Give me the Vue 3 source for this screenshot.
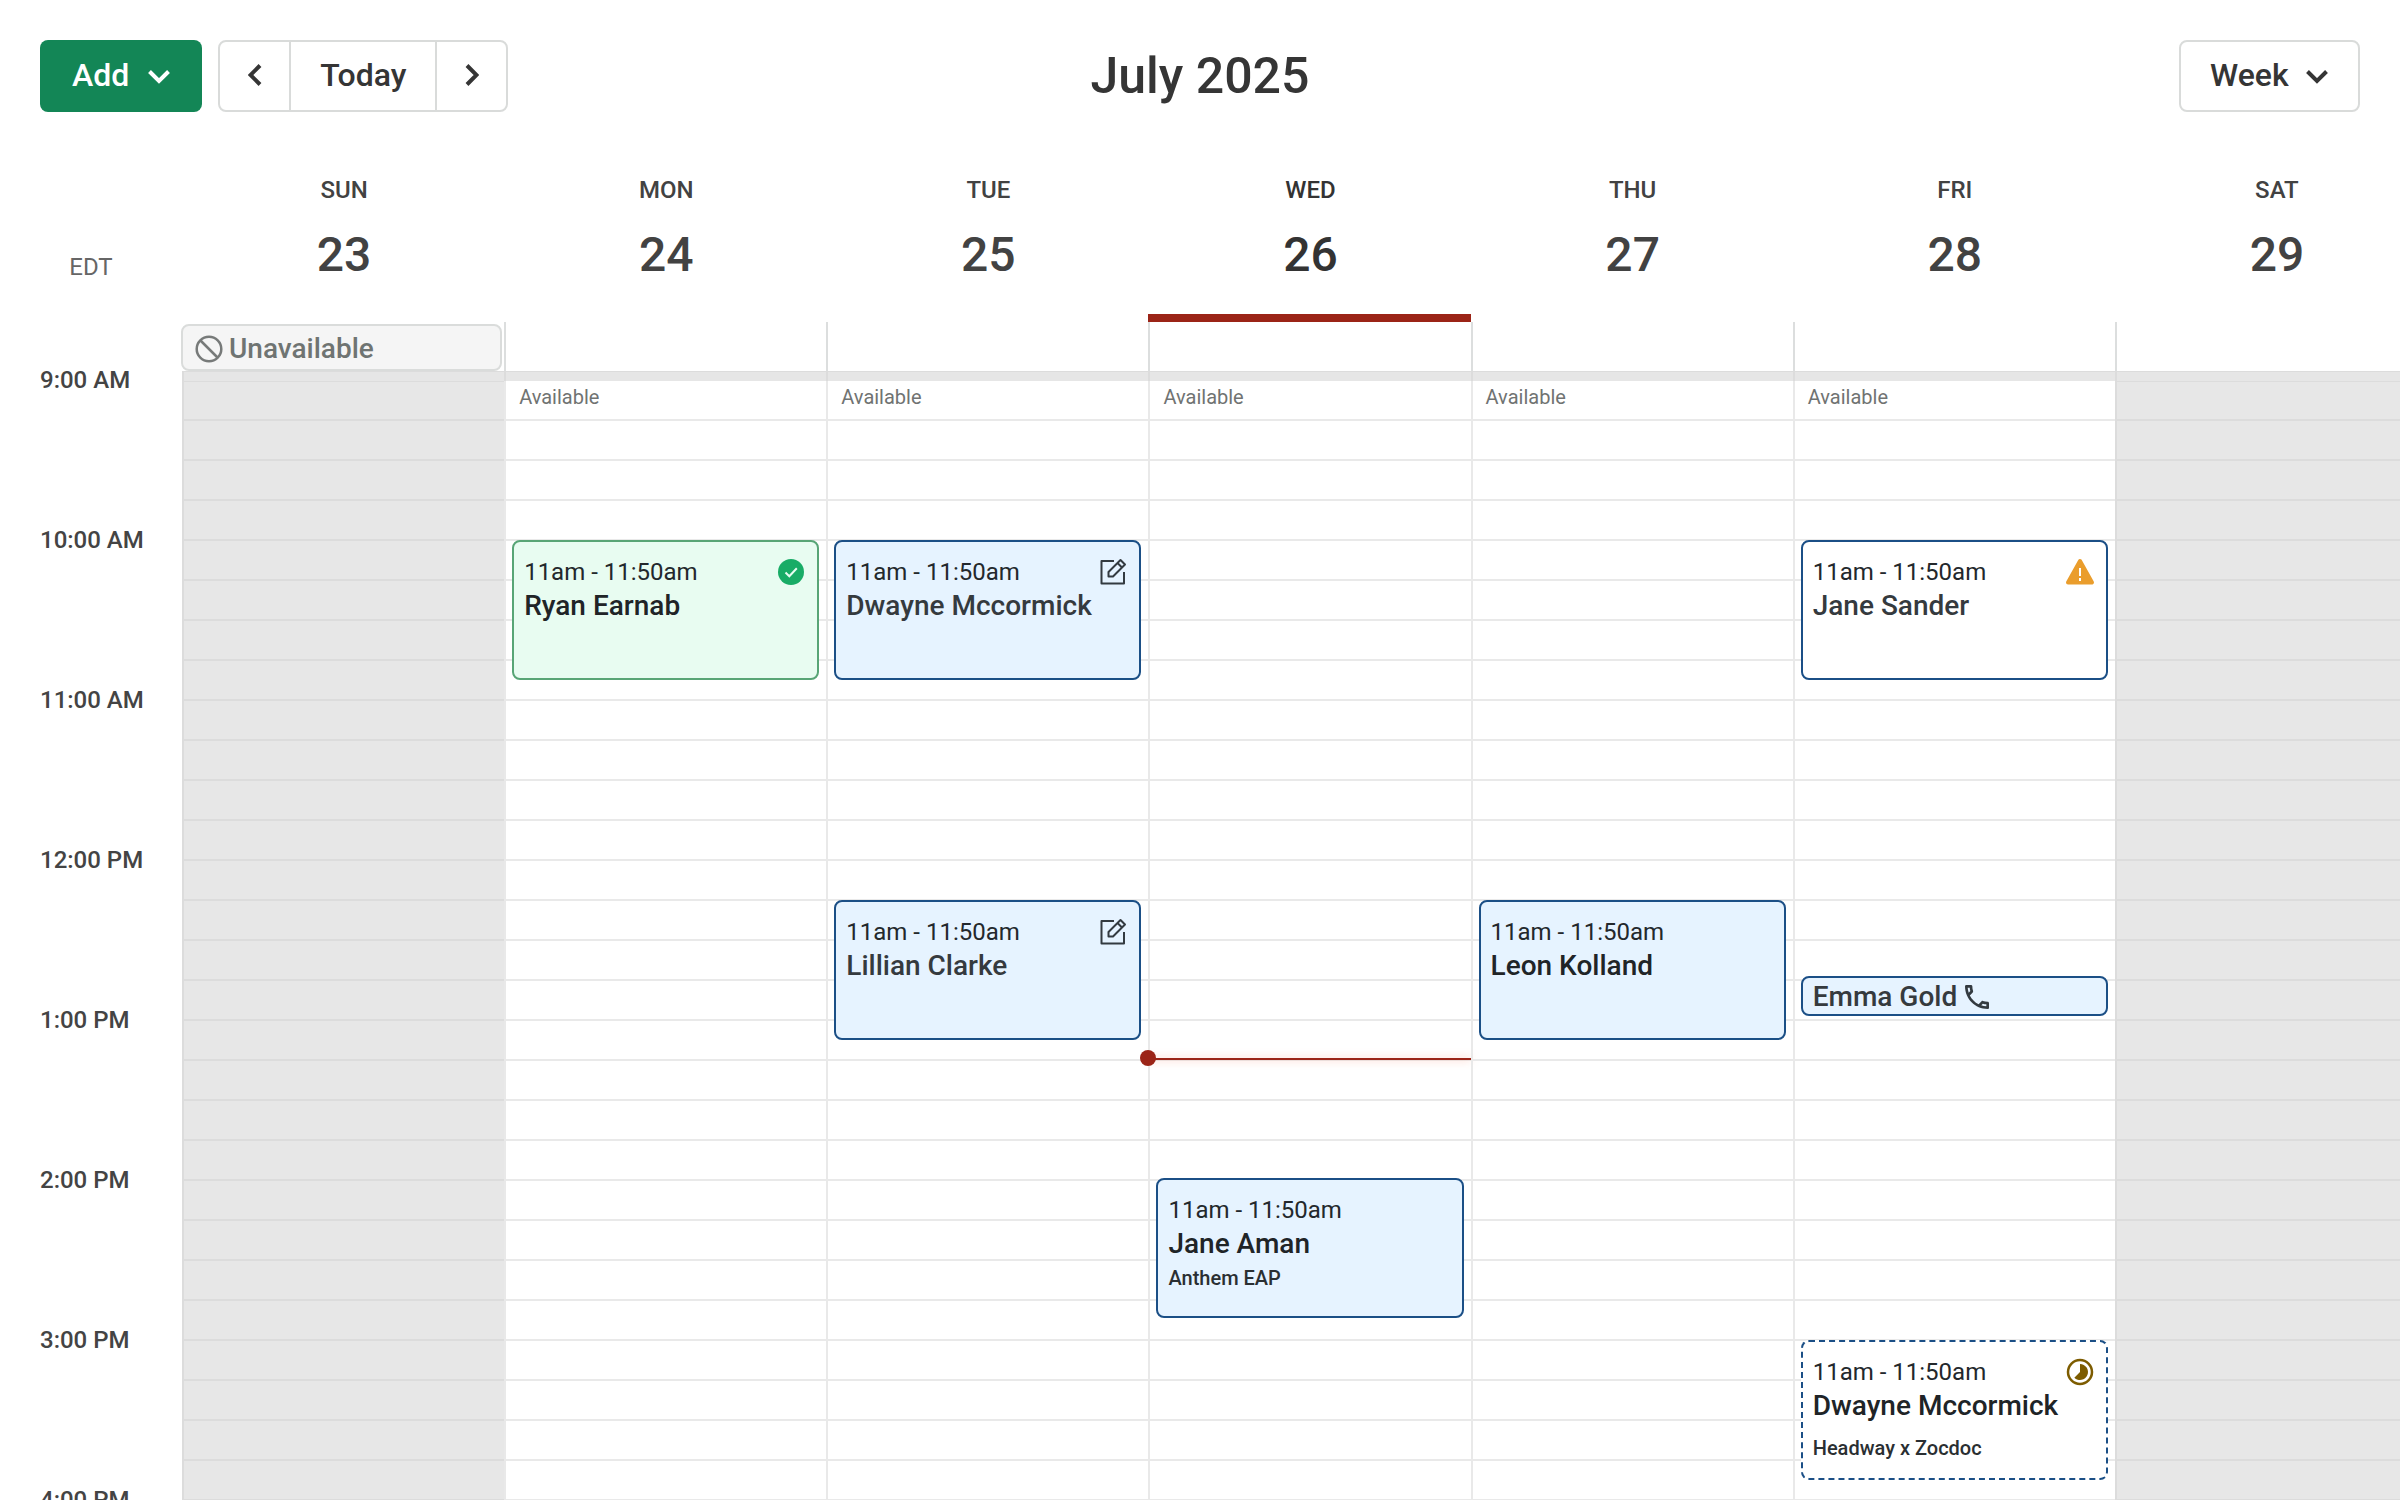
<script setup>
import { ref } from 'vue';

const view = ref('Week')

// vertical scale of the grid: one hour is 160px, the first row is 9 AM
const hours = ['9:00 AM', '10:00 AM', '11:00 AM', '12:00 PM', '1:00 PM', '2:00 PM', '3:00 PM', '4:00 PM']
const hourHeight = 160
const nowOffset = 678

const days = [
    { name: 'SUN', date: 23, off: true, allDay: 'Unavailable', events: [] },
    {
        name: 'MON', date: 24, events: [
            { top: 160, time: '11am - 11:50am', title: 'Ryan Earnab', type: 'done', icon: 'check', strong: true },
        ]
    },
    {
        name: 'TUE', date: 25, events: [
            { top: 160, time: '11am - 11:50am', title: 'Dwayne Mccormick', type: 'booked', icon: 'edit' },
            { top: 520, time: '11am - 11:50am', title: 'Lillian Clarke', type: 'booked', icon: 'edit' },
        ]
    },
    {
        name: 'WED', date: 26, today: true, events: [
            { top: 798, time: '11am - 11:50am', title: 'Jane Aman', note: 'Anthem EAP', type: 'booked', strong: true },
        ]
    },
    {
        name: 'THU', date: 27, events: [
            { top: 520, time: '11am - 11:50am', title: 'Leon Kolland', type: 'booked', strong: true },
        ]
    },
    {
        name: 'FRI', date: 28, events: [
            { top: 160, time: '11am - 11:50am', title: 'Jane Sander', type: 'open', icon: 'warning' },
            { top: 596, height: 40, title: 'Emma Gold', type: 'booked', phone: true },
            { top: 960, time: '11am - 11:50am', title: 'Dwayne Mccormick', note: 'Headway x Zocdoc', type: 'pending', icon: 'clock', strong: true },
        ]
    },
    { name: 'SAT', date: 29, off: true, events: [] },
]
</script>

<template>
    <div class="calendar">
        <header class="toolbar">
            <div class="toolbar__left">
                <button type="button" class="btn btn--add">
                    Add
                    <svg width="22" height="14" viewBox="0 0 22 14"><path d="M1.5 1.5 11 11l9.5-9.5" /></svg>
                </button>
                <div class="pager">
                    <button type="button" class="pager__arrow" aria-label="Previous">
                        <svg width="14" height="22" viewBox="0 0 14 22"><path d="M12 1.5 2.5 11l9.5 9.5" /></svg>
                    </button>
                    <button type="button" class="pager__today">Today</button>
                    <button type="button" class="pager__arrow" aria-label="Next">
                        <svg width="14" height="22" viewBox="0 0 14 22"><path d="M2 1.5 11.5 11 2 20.5" /></svg>
                    </button>
                </div>
            </div>
            <h1>July 2025</h1>
            <label class="view">
                <select v-model="view" aria-label="View">
                    <option>Day</option>
                    <option>Week</option>
                </select>
                <svg width="22" height="14" viewBox="0 0 22 14"><path d="M1.5 1.5 11 11l9.5-9.5" /></svg>
            </label>
        </header>

        <div class="week week--head">
            <div class="zone">EDT</div>
            <div v-for="day in days" :key="day.date" class="day" :class="{ 'day--today': day.today }">
                <span class="day__name">{{ day.name }}</span>
                <span class="day__date">{{ day.date }}</span>
            </div>
        </div>

        <div class="week week--allday">
            <div></div>
            <div v-for="day in days" :key="day.date" class="allday">
                <div v-if="day.allDay" class="chip">
                    <svg width="28" height="28" viewBox="0 0 28 28"><circle cx="14" cy="14" r="12.3" /><path d="m5.5 5.5 17 17" /></svg>
                    {{ day.allDay }}
                </div>
            </div>
        </div>

        <div class="scroller">
            <div class="week week--body">
                <div class="hours">
                    <div v-for="hour in hours" :key="hour" class="hour" :style="{ height: hourHeight + 'px' }">
                        {{ hour }}
                    </div>
                </div>
                <div v-for="day in days" :key="day.date" class="column" :class="{ 'column--off': day.off }">
                    <div v-if="!day.off" class="available">Available</div>

                    <article v-for="event in day.events" :key="event.top" class="event"
                        :class="['event--' + event.type, { 'event--strong': event.strong, 'event--short': event.height }]"
                        :style="{ top: event.top + 'px', height: (event.height || 140) + 'px' }">
                        <div class="event__text">
                            <div v-if="event.time" class="event__time">{{ event.time }}</div>
                            <div class="event__title">{{ event.title }}</div>
                            <div v-if="event.note" class="event__note">{{ event.note }}</div>
                        </div>
                        <svg v-if="event.phone" class="phone" width="32" height="32" viewBox="0 0 24 24">
                            <path d="M6.54 5c.06.89.21 1.76.45 2.59l-1.2 1.2c-.41-1.2-.67-2.47-.76-3.79h1.51m9.86 12.02c.85.24 1.72.39 2.6.45v1.49c-1.32-.09-2.59-.35-3.8-.75l1.2-1.19M7.5 3H4c-.55 0-1 .45-1 1 0 9.39 7.61 17 17 17 .55 0 1-.45 1-1v-3.49c0-.55-.45-1-1-1-1.24 0-2.45-.2-3.57-.57-.1-.04-.21-.05-.31-.05-.26 0-.51.1-.71.29l-2.2 2.2c-2.83-1.45-5.15-3.76-6.59-6.59l2.2-2.2c.28-.28.36-.67.25-1.02C8.7 6.45 8.5 5.25 8.5 4c0-.55-.45-1-1-1z" />
                        </svg>
                        <svg v-if="event.icon" class="event__icon" width="32" height="32" viewBox="0 0 32 32">
                            <template v-if="event.icon === 'check'">
                                <circle cx="16" cy="16" r="13" fill="#18ac66" />
                                <path d="m10.5 16.5 3.8 3.7 7.5-8" fill="none" stroke="#e8fcf1" stroke-width="2" />
                            </template>
                            <template v-else-if="event.icon === 'edit'">
                                <g fill="none" stroke="#333a40" stroke-width="2" stroke-linejoin="round">
                                    <path d="M17 5H4.5V27.5H27V16" />
                                    <path d="M11.5 20.5V16L23.5 4 28 8.5 16 20.5z" />
                                    <path d="m20.5 7 4.5 4.5" />
                                </g>
                            </template>
                            <template v-else-if="event.icon === 'warning'">
                                <path d="M16 5 28 26.5H4z" fill="#ea9d2c" stroke="#ea9d2c" stroke-width="4" stroke-linejoin="round" />
                                <path d="M16 12v8m0 2v3" fill="none" stroke="#fff" stroke-width="2" />
                            </template>
                            <template v-else>
                                <circle cx="16" cy="16" r="12" fill="none" stroke="#7d5c00" stroke-width="2.5" />
                                <path d="M16 8a8 8 0 1 1-5.66 13.66L16 16z" fill="#7d5c00" />
                            </template>
                        </svg>
                    </article>

                    <div v-if="day.today" class="now" :style="{ top: nowOffset + 'px' }"></div>
                </div>
            </div>
        </div>
    </div>
</template>

<style>
body {
    background: #fff;
}
</style>

<style scoped>
* {
    box-sizing: border-box;
}

.calendar {
    display: flex;
    flex-direction: column;
    height: 100vh;
    overflow: hidden;
    font-family: Roboto, "Liberation Sans", sans-serif;
    font-weight: 500;
    color: #353535;
}

button,
select {
    font: inherit;
    color: inherit;
    cursor: pointer;
}

/* Toolbar */
.toolbar {
    display: grid;
    grid-template-columns: 1fr auto 1fr;
    align-items: center;
    padding: 40px 40px 0;
    font-size: 32px;
}

.toolbar svg {
    fill: none;
    stroke: currentColor;
    stroke-width: 4;
}

.toolbar__left {
    display: flex;
    gap: 16px;
}

.btn {
    display: flex;
    align-items: center;
    gap: 19px;
    height: 72px;
    padding: 0 32px 2px;
    border: 0;
    border-radius: 8px;
}

.btn--add {
    background: #138656;
    color: #fff;
}

.btn svg {
    margin-top: 4px;
}

.pager {
    display: flex;
    height: 72px;
    border: 2px solid #d9dbda;
    border-radius: 8px;
}

.pager button {
    border: 0;
    background: none;
}

.pager .pager__arrow {
    display: flex;
    align-items: center;
    justify-content: center;
    width: 69px;
    padding: 0 0 2px;
}

.pager .pager__today {
    padding: 0 29px 2px;
    border-left: 2px solid #d9dbda;
    border-right: 2px solid #d9dbda;
}

h1 {
    margin: 0;
    font-size: 50px;
    font-weight: 500;
    line-height: 64px;
}

.view {
    position: relative;
    justify-self: end;
}

.view select {
    display: block;
    height: 72px;
    padding: 0 69px 2px 29px;
    border: 2px solid #d9dbda;
    border-radius: 8px;
    background: #fff;
    appearance: none;
}

.view svg {
    position: absolute;
    top: 30px;
    right: 32px;
    pointer-events: none;
}

/* The last day runs a little past the right edge */
.week {
    display: grid;
    grid-template-columns: 182px repeat(7, 1fr);
    width: calc(100% + 37px);
}

.week--head {
    margin-top: 61px;
}

.zone {
    align-self: end;
    padding-bottom: 39px;
    font-size: 24px;
    font-weight: 400;
    line-height: 32px;
    text-align: center;
    color: #666;
}

.day {
    display: flex;
    flex-direction: column;
    align-items: center;
    gap: 20px;
    padding: 0 0 31px 2px;
    border-bottom: 8px solid transparent;
    color: #424242;
}

.day--today {
    border-bottom-color: #9b2417;
    color: #333;
}

.day__name {
    font-size: 24px;
    line-height: 34px;
}

.day__date {
    font-size: 48px;
    line-height: 56px;
}

.allday {
    height: 49px;
    padding-top: 2px;
    border-left: 2px solid #dcdede;
}

.allday:nth-child(2) {
    border-left: 0;
}

.chip {
    display: flex;
    align-items: center;
    gap: 6px;
    height: 47px;
    margin: 0 2px 0 -1px;
    padding: 2px 12px 0;
    border: 2px solid #dadcdb;
    border-radius: 8px;
    background: #f5f5f5;
    font-size: 28px;
    color: #6f7472;
}

.chip svg {
    fill: none;
    stroke: #777a79;
    stroke-width: 2.5;
}

/* Time grid */
.scroller {
    flex: 1;
    min-height: 0;
    overflow: hidden;
}

/* each label is centred on the line that starts its hour */
.hour {
    padding-left: 40px;
    font-size: 24px;
    line-height: 18px;
    color: #444;
}

.column {
    position: relative;
    margin-top: 9px;
    border-left: 2px solid #e9e9e9;
    background: repeating-linear-gradient(to bottom, #e9e9e9 0 1px, transparent 1px 39px, #e9e9e9 39px 40px);
}

.column::before {
    content: "";
    position: absolute;
    top: -9px;
    left: -2px;
    right: 0;
    height: 9px;
    border-top: 1px solid #dcdcdc;
    border-left: 2px solid #dcdcdc;
    background: #e6e6e6;
}

.column--off {
    border-left-color: #dcdcdc;
    background: repeating-linear-gradient(to bottom, #dcdcdc 0 1px, #e7e7e7 1px 39px, #dcdcdc 39px 40px);
}

.column--off::before {
    border-bottom: 1px solid #dcdcdc;
}

.available {
    padding: 5px 13px;
    font-size: 20px;
    font-weight: 400;
    line-height: 24px;
    color: #707372;
}

.event {
    position: absolute;
    left: 6px;
    right: 7px;
    display: flex;
    justify-content: space-between;
    align-items: flex-start;
    padding: 14px 10px 0;
    border: 2px solid #1b4f86;
    border-radius: 8px;
    background: #fff;
    white-space: nowrap;
}

.event--booked {
    background: #e6f3ff;
}

.event--done {
    border-color: #58a576;
    background: #e8fcf1;
}

.event--pending {
    border-style: dashed;
}

.event--short {
    justify-content: flex-start;
    align-items: center;
    gap: 4px;
    padding-top: 1px;
}

.event__time {
    font-size: 24px;
    font-weight: 400;
    line-height: 32px;
    color: #23282c;
}

.event__title {
    font-size: 28px;
    line-height: 36px;
    color: #353a3e;
}

.event--strong .event__title {
    color: #202427;
}

.event__note {
    font-size: 20px;
    line-height: 32px;
    color: #2a2f32;
}

.event--pending .event__note {
    margin-top: 8px;
}

.phone {
    fill: #333a40;
}

.now {
    position: absolute;
    left: -2px;
    right: 0;
    height: 2px;
    background: #9b2417;
    box-shadow: 0 0 8px rgba(255, 130, 95, 0.6);
}

.now::before {
    content: "";
    position: absolute;
    top: -8px;
    left: -8px;
    width: 16px;
    height: 16px;
    border-radius: 50%;
    background: #9b2417;
}
</style>
